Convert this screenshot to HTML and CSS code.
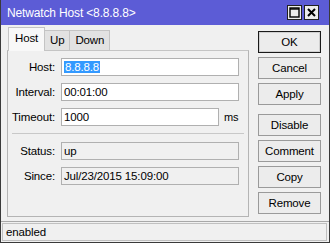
FILE: index.html
```html
<!DOCTYPE html>
<html>
<head>
<meta charset="utf-8">
<link rel="stylesheet" href="styles.css">
</head>
<body>
<div class="window">
  <div class="titlebar">
    <span class="title">Netwatch Host &lt;8.8.8.8&gt;</span>
    <div class="tb-buttons">
      <span class="tb-btn"><svg width="11" height="11" viewBox="0 0 11 11"><rect x="1" y="1" width="9" height="9" fill="none" stroke="#000" stroke-width="1.4"/><line x1="1" y1="2" x2="10" y2="2" stroke="#000" stroke-width="1.4"/></svg></span>
      <span class="tb-btn"><svg width="11" height="11" viewBox="0 0 11 11"><path d="M2 2 L9 9 M9 2 L2 9" stroke="#000" stroke-width="2"/></svg></span>
    </div>
  </div>
  <div class="main">
    <div class="left">
      <div class="tabs">
        <div class="tab active">Host</div>
        <div class="tab">Up</div>
        <div class="tab">Down</div>
      </div>
      <div class="panel">
        <div class="row"><label>Host:</label><div class="input"><span class="sel">8.8.8.8</span></div></div>
        <div class="row"><label>Interval:</label><div class="input">00:01:00</div></div>
        <div class="row"><label>Timeout:</label><div class="input short">1000</div><span class="unit">ms</span></div>
        <div class="sep"></div>
        <div class="row"><label>Status:</label><div class="input ro">up</div></div>
        <div class="row"><label>Since:</label><div class="input ro">Jul/23/2015 15:09:00</div></div>
      </div>
    </div>
    <div class="buttons">
      <div class="btn default">OK</div>
      <div class="btn">Cancel</div>
      <div class="btn">Apply</div>
      <div class="btn gap">Disable</div>
      <div class="btn">Comment</div>
      <div class="btn">Copy</div>
      <div class="btn">Remove</div>
    </div>
  </div>
  <div class="statusbar"><div class="statusbox">enabled</div></div>
</div>
</body>
</html>
```

FILE: styles.css
```css
html, body {
  margin: 0;
  padding: 0;
  background: #ffffff;
}
body {
  font-family: "Liberation Sans", Arial, sans-serif;
  font-size: 11.5px;
  letter-spacing: -0.15px;
  color: #000;
}
.window {
  width: 330px;
  height: 243px;
  box-sizing: border-box;
  border: 1px solid #3a3a3a;
  border-top: none;
  background: #f0f0f0;
  display: flex;
  flex-direction: column;
}
.titlebar {
  height: 25px;
  background: #5c5cd6;
  color: #fff;
  display: flex;
  align-items: center;
  justify-content: space-between;
  padding: 0 10px 0 6px;
  font-size: 12px;
}
.title {
  margin-top: 1px;
}
.tb-buttons {
  display: flex;
  gap: 2px;
}
.tb-btn {
  width: 13px;
  height: 13px;
  background: #ececec;
  border: 1px solid #202020;
  display: flex;
  align-items: center;
  justify-content: center;
}
.main {
  display: flex;
  padding: 2px 0 0 6px;
}
.left {
  width: 242px;
}
.tabs {
  display: flex;
  height: 23px;
  align-items: flex-end;
  padding-left: 1px;
}
.tab {
  height: 20px;
  box-sizing: border-box;
  border: 1px solid #c4c4c4;
  border-bottom: none;
  background: #e2e2e2;
  padding: 3px 5px 0;
  margin-right: -1px;
}
.tab.active {
  background: #f8f8f8;
  padding: 4px 6px 0;
  position: relative;
  z-index: 1;
  margin-bottom: -1px;
  height: 24px;
}
.panel {
  height: 167px;
  box-sizing: border-box;
  border: 1px solid #b4b4b4;
  border-top-color: #c4c4c4;
  padding: 7px 0 0 0;
}
.row {
  display: flex;
  align-items: center;
  height: 18px;
  margin-bottom: 7px;
}
.row label {
  width: 47px;
  text-align: right;
  padding-right: 6px;
  flex: none;
}
.input {
  width: 178px;
  height: 18px;
  box-sizing: border-box;
  border: 1px solid #b0b0b0;
  background: #fff;
  padding: 0 0 0 2px;
  line-height: 16px;
}
.input.short {
  width: 158px;
}
.input.ro {
  background: #f0f0f0;
}
.unit {
  margin-left: 5px;
  font-size: 11px;
}
.sel {
  background: #3399ff;
  color: #fff;
  padding: 0 1px;
}
.sep {
  height: 1px;
  background: #c8c8c8;
  margin: 1px 4px 8px;
}
.buttons {
  display: flex;
  flex-direction: column;
  margin-left: 9px;
  padding-top: 4px;
  gap: 4px;
}
.btn {
  width: 63px;
  height: 22px;
  box-sizing: border-box;
  border: 1px solid #9a9a9a;
  background: #ececec;
  display: flex;
  align-items: center;
  justify-content: center;
}
.btn.default {
  border: 1px solid #1a1a1a;
  box-shadow: inset 0 0 0 1px #d0d0d0;
}
.btn.gap {
  margin-top: 5px;
}
.statusbar {
  margin-top: auto;
  border-top: 1px solid #a8a8a8;
  padding: 1px 2px 1px 1px;
}
.statusbox {
  height: 18px;
  box-sizing: border-box;
  border: 1px solid #c0c0c0;
  padding-left: 3px;
  line-height: 16px;
}
```
